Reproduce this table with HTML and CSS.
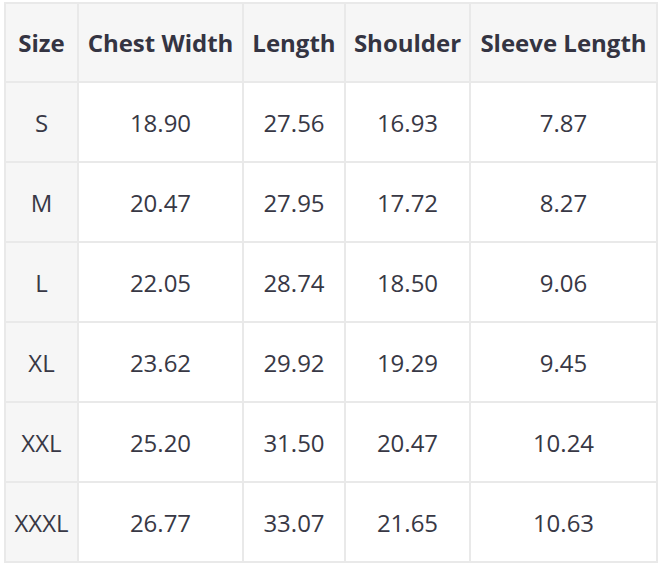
FILE: index.html
```html
<!DOCTYPE html>
<html lang="en">
<head>
<meta charset="utf-8">
<title>Size Chart</title>
<link rel="stylesheet" href="styles.css">
</head>
<body>
<table class="size-table">
  <colgroup>
    <col class="c-size">
    <col class="c-chest">
    <col class="c-length">
    <col class="c-shoulder">
    <col class="c-sleeve">
  </colgroup>
  <thead>
    <tr>
      <th>Size</th>
      <th>Chest Width</th>
      <th>Length</th>
      <th>Shoulder</th>
      <th>Sleeve Length</th>
    </tr>
  </thead>
  <tbody>
    <tr><th>S</th><td>18.90</td><td>27.56</td><td>16.93</td><td>7.87</td></tr>
    <tr><th>M</th><td>20.47</td><td>27.95</td><td>17.72</td><td>8.27</td></tr>
    <tr><th>L</th><td>22.05</td><td>28.74</td><td>18.50</td><td>9.06</td></tr>
    <tr><th>XL</th><td>23.62</td><td>29.92</td><td>19.29</td><td>9.45</td></tr>
    <tr><th>XXL</th><td>25.20</td><td>31.50</td><td>20.47</td><td>10.24</td></tr>
    <tr><th>XXXL</th><td>26.77</td><td>33.07</td><td>21.65</td><td>10.63</td></tr>
  </tbody>
</table>
</body>
</html>
```

FILE: styles.css
```css
html, body {
  margin: 0;
  padding: 0;
  background: #ffffff;
}

body {
  padding: 2px 0 0 4px;
  font-family: "Open Sans", "Liberation Sans", sans-serif;
  color: #383845;
}

.size-table {
  border-collapse: collapse;
  table-layout: fixed;
  width: 654px;
  font-size: 24px;
}

.c-size { width: 73px; }
.c-chest { width: 165px; }
.c-length { width: 102px; }
.c-shoulder { width: 125px; }
.c-sleeve { width: 187px; }

.size-table th,
.size-table td {
  border: 2px solid #e9e9e9;
  text-align: center;
  vertical-align: middle;
  padding: 0;
  white-space: nowrap;
}

.size-table thead tr { height: 79px; }
.size-table tbody tr { height: 80px; }

.size-table thead th {
  background: #f6f6f6;
  font-weight: 700;
  color: #343442;
}

.size-table tbody th {
  background: #f6f6f6;
  font-weight: 400;
}

.size-table td {
  background: #ffffff;
}
```
